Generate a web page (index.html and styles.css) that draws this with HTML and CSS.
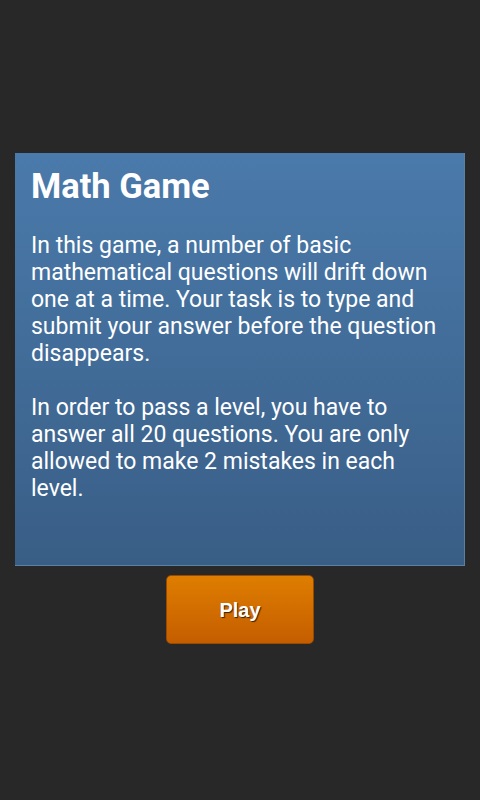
FILE: index.html
```html
<!DOCTYPE html>
<html lang="en">
<head>
  <meta charset="UTF-8">
  <meta name="viewport" content="width=device-width, initial-scale=1.0">
  <title>Math Game</title>
  <link rel="stylesheet" href="styles.css">
</head>
<body>
  <div class="screen">
    <div class="panel">
      <h1>Math Game</h1>
      <p>In this game, a number of basic mathematical questions will drift down one at a time. Your task is to type and submit your answer before the question disappears.</p>
      <p>In order to pass a level, you have to answer all 20 questions. You are only allowed to make 2 mistakes in each level.</p>
    </div>
    <button class="play-button">Play</button>
  </div>
</body>
</html>
```

FILE: styles.css
```css
html, body {
  margin: 0;
  padding: 0;
  background-color: #282828;
  height: 100%;
}
body {
  font-family: Roboto, "Noto Sans", sans-serif;
  color: #fff;
}
.screen {
  display: flex;
  flex-direction: column;
  align-items: center;
  padding-top: 153px;
}
.panel {
  box-sizing: border-box;
  width: 450px;
  height: 413px;
  padding: 12px 16px 0 16px;
  background: linear-gradient(to bottom, #4a7aab, #395e86);
  border-right: 1px solid #5a80a6;
  border-bottom: 1px solid #5a80a6;
}
h1 {
  font-size: 34.5px;
  font-weight: bold;
  line-height: 42px;
  margin: 0 0 25px 0;
}
p {
  font-size: 23px;
  line-height: 27px;
  margin: 0 0 27px 0;
}
.play-button {
  margin-top: 9px;
  width: 148px;
  height: 69px;
  padding-top: 3px;
  border: 1px solid #9a4a00;
  border-radius: 5px;
  background: linear-gradient(to bottom, #de7e00, #c55d00);
  color: #fff;
  font-family: "Liberation Sans", Arial, sans-serif;
  font-weight: bold;
  font-size: 20px;
  text-shadow: 1px 1px 1px #3a2000;
  cursor: pointer;
}
```
